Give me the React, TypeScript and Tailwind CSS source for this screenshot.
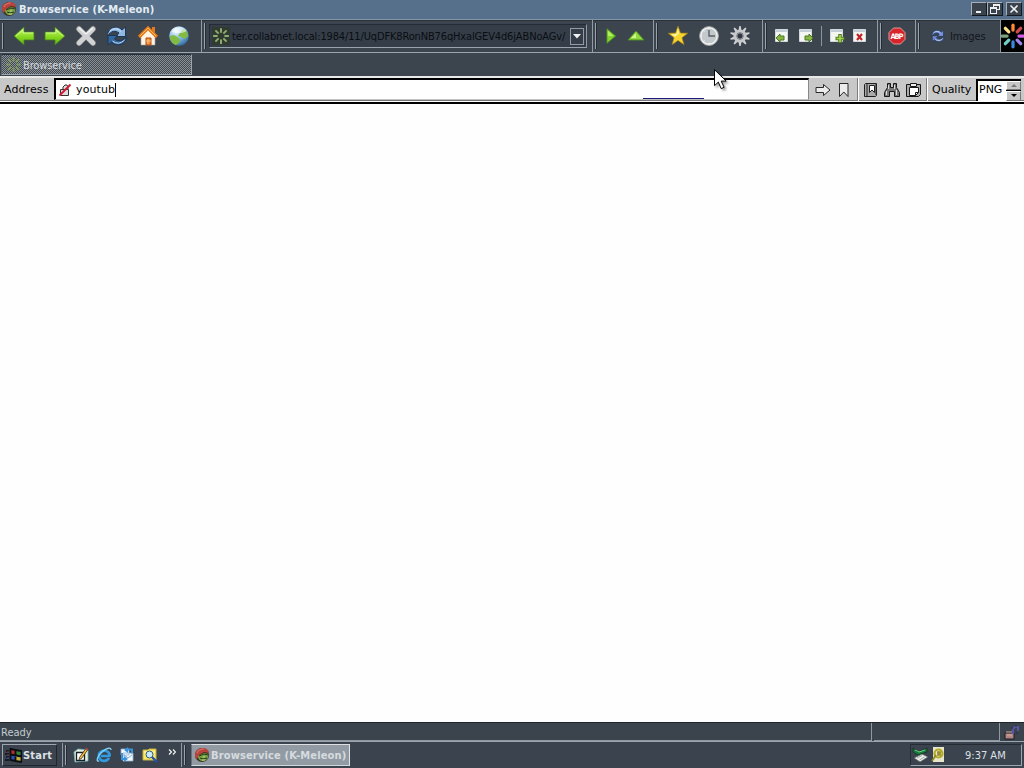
import type { ReactNode } from "react";
import clsx from "clsx";

type IconProps = { className?: string };

const TAHOMA = "font-['DejaVu_Sans_Condensed','DejaVu_Sans',sans-serif]";
const VERDANA = "font-['DejaVu_Sans',sans-serif]";

function Melon({ className = "size-4" }: IconProps) {
  return (
    <svg viewBox="0 0 16 16" className={className}>
      <circle cx="8" cy="8" r="7" fill="#3a3322" />
      <path d="M1 8C1 3 5 1 9 1s6 3 6 5l-5-1-5 3-2 4C1 11 1 9 1 8z" fill="#b9433b" />
      <path d="M3 6c1-3 4-4 7-4" fill="none" stroke="#d8706a" strokeWidth="1.2" />
      <path d="M4 9l6-3 4 1c1 3-1 7-5 7-3 0-5-2-5-5z" fill="#7aa544" />
      <path d="M5 9l5-2 4 1M6 11l3 1 4-1" fill="none" stroke="#24351b" />
      <path d="M9 10h2M8 13h3" stroke="#c2da8c" />
    </svg>
  );
}

function Burst({ className, colors, wide }: IconProps & { colors: string[]; wide?: boolean }) {
  return (
    <svg viewBox="0 0 24 24" className={className}>
      {colors.map((color, i) => (
        <path
          key={i}
          d={wide ? "M12 6.500V2" : "M12 7.500V1.500"}
          stroke={color}
          strokeWidth={wide ? 3 : 2.6}
          strokeLinecap={wide ? "round" : "butt"}
          transform={`rotate(${i * 45} 12 12)`}
        />
      ))}
    </svg>
  );
}

const green = Array<string>(8).fill("#8eae71");
const dimGreen = Array<string>(8).fill("#7f9a60");
const rainbow = ["#ff8934", "#cf4a4a", "#d65ae8", "#a284ee", "#3b87e4", "#6fd0c5", "#7aa57b", "#ffe28a"];

function Arrow({ flip }: { flip?: boolean }) {
  return (
    <svg viewBox="0 0 22 22" className={clsx("h-[22px] w-[22px]", flip && "-scale-x-100")}>
      <defs>
        <linearGradient id="arrow" x1="0" y1="0" x2="0" y2="1">
          <stop offset="0" stopColor="#cdf582" />
          <stop offset=".5" stopColor="#8ddc25" />
          <stop offset="1" stopColor="#5ab20c" />
        </linearGradient>
      </defs>
      <path d="M1 11L11 2v5h10v8H11v5z" fill="url(#arrow)" stroke="#417d22" strokeWidth=".8" />
      <path d="M3 11l7-6v3h10" fill="none" stroke="#d9ff9c" strokeWidth=".8" />
    </svg>
  );
}

function Stop() {
  return (
    <svg viewBox="0 0 22 22" className="h-[22px] w-[22px]">
      <path d="M4 4l14 14M18 4L4 18" stroke="#787b7d" strokeWidth="6" strokeLinecap="round" />
      <path d="M4 4l14 14M18 4L4 18" stroke="#d0d2d3" strokeWidth="4.6" strokeLinecap="round" />
      <path d="M4 3l7 6 7-6" fill="none" stroke="#f4f4f4" strokeWidth="1.2" />
    </svg>
  );
}

function Refresh({ className = "h-[22px] w-[22px]", light = "#8fb8e2", dark = "#34699f" }: IconProps & { light?: string; dark?: string }) {
  return (
    <svg viewBox="0 0 22 22" className={className}>
      <path d="M1.500 11C1 3 11-1 16 5l3.500-3v9.500H10L13 8C9 5 5 6 1.500 11z" fill={light} stroke="#1d3655" />
      <path d="M20.500 12c0 7-10 11-15 5l-3.500 3v-9.500h9.500l-3 3.500c4 3 8 2 12-2z" fill={dark} stroke="#1d3655" />
      <path d="M4 6c3-3 8-3 11 .500M6.500 16c4 3 8 3 12-1" fill="none" stroke="#d8ebfb" strokeWidth=".9" />
    </svg>
  );
}

function Home() {
  return (
    <svg viewBox="0 0 22 22" className="h-[22px] w-[22px]">
      <path d="M4 10l7-7 7 8v9H4z" fill="#fff3e2" stroke="#a6a09a" strokeWidth=".6" />
      <path d="M15 2h3v6h-3z" fill="#df7b22" />
      <path d="M2 12l9-9 9 9" fill="none" stroke="#e47616" strokeWidth="3.2" />
      <path d="M3 11l8-8 8 8" fill="none" stroke="#ffbd66" strokeWidth="1" />
      <path d="M9 13h5v7H9z" fill="#f48427" stroke="#a74f1d" />
      <path d="M11 14v5M9 16h5" stroke="#ffce8f" strokeWidth=".8" />
    </svg>
  );
}

function Globe() {
  return (
    <svg viewBox="0 0 22 22" className="h-[22px] w-[22px]">
      <defs>
        <radialGradient id="globe" cx=".35" cy=".25" r=".8">
          <stop offset="0" stopColor="#f5fcff" />
          <stop offset=".5" stopColor="#85bde9" />
          <stop offset="1" stopColor="#31699e" />
        </radialGradient>
      </defs>
      <circle cx="11" cy="11" r="9.800" fill="url(#globe)" />
      <path d="M2 11l4-1 5 3 1 4-4 3c-4-1-6-5-6-9zM12 8l3-4c3 1 5 4 5 7l-3 3-4-2-3-1z" fill="#83bb41" />
      <path d="M3.500 7c3-6 11-7 15-1-4 3-10 2-15 1z" fill="#fff" opacity=".55" />
    </svg>
  );
}

function Star() {
  return (
    <svg viewBox="0 0 22 22" className="h-[22px] w-[22px]">
      <path d="M11 1l2.500 7 7.300.2-5.800 4.500 2.100 7L11 15.500 5 19.800l2-7L1.200 8.200 8.500 8z" fill="#f6d52c" stroke="#9b7b20" strokeWidth=".7" />
      <path d="M11 3l-1.500 6-5.500.1L8 12l2-2 2-1z" fill="#fff4a0" />
    </svg>
  );
}

function Clock() {
  return (
    <svg viewBox="0 0 22 22" className="h-[22px] w-[22px]">
      <circle cx="11" cy="11" r="9.400" fill="#d4d7d9" stroke="#a1a5a8" />
      <circle cx="11" cy="11" r="8.100" fill="#c3c8cb" stroke="#f1f2f2" strokeWidth="1.200" />
      <path d="M11 5v6h6" fill="none" stroke="#54616a" strokeWidth="1.400" />
      <path d="M11 3v1M11 18v1M3 11h1M5.500 5.500l1 1M5.500 16.500l1-1" stroke="#fff" />
    </svg>
  );
}

function Gear() {
  return (
    <svg viewBox="0 0 22 22" className="h-[22px] w-[22px]">
      {[0, 36, 72, 108, 144, 180, 216, 252, 288, 324].map((angle) => (
        <path key={angle} d="M9.600 5l.7-4h1.400l.7 4z" fill="#d0d2d3" transform={`rotate(${angle} 11 11)`} />
      ))}
      <circle cx="11" cy="11" r="5" fill="none" stroke="#c6c8ca" strokeWidth="3.200" />
      <circle cx="11" cy="11" r="3" fill="#313841" stroke="#8b9094" />
    </svg>
  );
}

function PageIcon({ kind }: { kind: "left" | "right" | "add" | "close" }) {
  return (
    <svg viewBox="0 0 16 16" className="size-4">
      <path d="M1.500 1.500h12v12h-12z" fill="#f3f6f1" stroke="#d2d8dc" />
      <path d="M2 3h11" stroke="#b4bfcf" strokeWidth="1.500" />
      {kind === "left" && <path d="M2 10l4-4v2h4v4H6v2z" fill="#87b541" stroke="#4c7726" />}
      {kind === "right" && <path d="M15 10l-4-4v2H7v4h4v2z" fill="#87b541" stroke="#4c7726" />}
      {kind === "add" && (
        <>
          <path d="M11 6v9M6.500 10.500h9" stroke="#577b26" strokeWidth="3.600" />
          <path d="M11 7v7M7.500 10.500h7" stroke="#a0d550" strokeWidth="1.700" />
        </>
      )}
      {kind === "close" && <path d="M5 6l5 6M10 6l-5 6" stroke="#c51f23" strokeWidth="2" />}
    </svg>
  );
}

// Divider plus the drag handle that starts every band
function Band({ className, children, first }: { className: string; children?: ReactNode; first?: boolean }) {
  return (
    <div className={clsx("flex shrink-0 items-center", !first && "border-l border-[#8e9aa5]", className)}>
      <div className="ml-[2px] h-[26px] w-[2px] shrink-0 border-l border-[#98a3ac] bg-[#252c35]" />
      {children}
    </div>
  );
}

function TitleButton({ children }: { children: ReactNode }) {
  return (
    <div className="flex h-[14px] w-4 items-center justify-center border border-t-[#a6b0b8] border-r-[#151a20] border-b-[#151a20] border-l-[#a6b0b8] bg-[#3b444e]">
      <svg viewBox="0 0 12 12" className="size-3" fill="none" stroke="#eef0f1" shapeRendering="crispEdges">
        {children}
      </svg>
    </div>
  );
}

function TitleBar() {
  return (
    <div className="flex h-[19px] items-center bg-[#56708b] pb-px">
      <Melon className="ml-px size-4" />
      <span className="ml-[2px] whitespace-nowrap pt-px text-[11px] leading-none font-bold tracking-[0.15px] text-[#e5edf3]">
        Browservice (K-Meleon)
      </span>
      <div className="mr-[2px] ml-auto flex">
        <TitleButton>
          <path d="M3 9h5" strokeWidth="2" />
        </TitleButton>
        <TitleButton>
          <path d="M4.500 4V1.500h6v5H8M4 2.500h6M1.500 4.500h6v6h-6zM2 5.500h5" />
        </TitleButton>
        <div className="ml-[3px]">
          <TitleButton>
            <path d="M2.500 2.500l7 7M9.500 2.500l-7 7" strokeWidth="1.600" shapeRendering="auto" />
          </TitleButton>
        </div>
      </div>
    </div>
  );
}

function Toolbar() {
  return (
    <div className="flex h-[34px] border-t border-b border-t-[#8795a2] border-b-[#9aa4ad] bg-[#3c444e] shadow-[inset_0_1px_0_#29323c]">
      <Band first className="w-[201px]">
        <div className="ml-[9px] flex gap-[9px]">
          <Arrow />
          <Arrow flip />
          <Stop />
          <Refresh />
          <Home />
          <Globe />
        </div>
      </Band>
      <Band className="w-[391px]">
        <div className="ml-[3px] flex h-[24px] w-[378px] items-center border border-t-[#242d36] border-r-[#8f9aa4] border-b-[#9aa4ad] border-l-[#242d36] bg-[#353e48]">
          <Burst className="ml-[2px] size-[18px] shrink-0 bg-[#303a30]" colors={green} />
          <span className="ml-[2px] w-[338px] shrink-0 pt-[2px] whitespace-nowrap text-[11px] leading-[14px] tracking-[-0.145px] text-[#0a0d12]">
            ter.collabnet.local:1984/11/UqDFK8RonNB76qHxalGEV4d6jABNoAGv/
          </span>
          <div className="flex h-[17px] w-[14px] shrink-0 items-center justify-center border border-[#929ca5]">
            <svg viewBox="0 0 8 5" className="h-[5px] w-2">
              <path d="M0 0h8L4 4.500z" fill="#f0f1f4" />
            </svg>
          </div>
        </div>
      </Band>
      <Band className="w-[61px]">
        <svg viewBox="0 0 12 18" className="ml-[9px] h-[18px] w-[11px]">
          <path d="M1 1l9.500 8L1 17z" fill="#82d52c" stroke="#4c8b25" />
          <path d="M2 3l6 6H2z" fill="#b3ee63" />
        </svg>
        <svg viewBox="0 0 18 12" className="ml-[10px] h-3 w-[18px]">
          <path d="M1 10L9 1l8 9z" fill="#91da3c" stroke="#4c8b25" />
          <path d="M4 8l5-5v5z" fill="#d1f58d" />
        </svg>
      </Band>
      <Band className="w-[109px]">
        <div className="ml-[9px] flex gap-[9px]">
          <Star />
          <Clock />
          <Gear />
        </div>
      </Band>
      <Band className="w-[115px]">
        <div className="ml-[7px] flex items-center">
          <PageIcon kind="left" />
          <span className="ml-2">
            <PageIcon kind="right" />
          </span>
          <span className="ml-[7px] h-5 w-px bg-[#8a949e]" />
          <span className="ml-[7px]">
            <PageIcon kind="add" />
          </span>
          <span className="ml-[7px]">
            <PageIcon kind="close" />
          </span>
        </div>
      </Band>
      <Band className="w-[38px]">
        <svg viewBox="0 0 18 18" className="ml-[6px] size-[18px]">
          <path d="M5.500 1h7L17 5.500v7L12.500 17h-7L1 12.500v-7z" fill="#d8252b" stroke="#e8b9b9" strokeWidth=".8" />
          <text x="9" y="11.800" textAnchor="middle" textLength="13" className={TAHOMA} fontSize="7.500" fontWeight="700" fill="#fff">
            ABP
          </text>
        </svg>
      </Band>
      <Band className="w-[85px]">
        <Refresh className="ml-[11px] size-[14px]" light="#7b94dc" dark="#7286c7" />
        <span className="ml-[5px] pt-[2px] whitespace-nowrap text-[11px] tracking-[-0.1px] text-[#12161d]">Images</span>
      </Band>
      <div className="flex w-6 items-center justify-center overflow-hidden border-l border-[#8e9aa5] bg-black">
        <Burst wide className="size-[26px] shrink-0" colors={rainbow} />
      </div>
    </div>
  );
}

function TabStrip() {
  return (
    <div className="h-[23px] bg-[#3c444d] pt-px pl-px">
      <div className="flex h-[21px] w-[191px] items-center border border-t-[#252d36] border-r-[#9da6ae] border-b-[#9da6ae] border-l-[#59636d] bg-[#424a53] bg-[repeating-conic-gradient(#8b9197_0_25%,#414951_0_50%)] bg-[size:2px_2px]">
        <Burst className="ml-[3px] size-[17px]" colors={dimGreen} />
        <span className="ml-px pt-[2px] text-[11px] leading-none tracking-[-0.14px] text-[#d6dbdf]">Browservice</span>
      </div>
    </div>
  );
}

function Divider() {
  return <span className="h-[23px] w-[2px] shrink-0 border-l border-[#7d7d7d] bg-white" />;
}

function AddressBar() {
  return (
    <div className={clsx("flex h-[28px] items-center border-t-2 border-b-2 border-t-[#e9e9e9] border-b-black bg-[#c8c8c8] text-[11px] text-black shadow-[inset_0_-1px_0_#fff,inset_0_-2px_0_#777]", VERDANA)}>
      <span className="w-[54px] pl-[4px] tracking-[0.1px]">Address</span>
      <div className="relative mb-[2px] flex h-[22px] w-[755px] items-center border-t-2 border-r border-b border-l-2 border-t-black border-r-[#888] border-b-[#c2c2c2] border-l-black bg-white">
        <svg viewBox="0 0 14 14" className="ml-[2px] size-[14px]" fill="none">
          <path d="M2.500 6.500h8v6h-8zM5 6V4l2-2h2l1 2v2" stroke="#333" fill="#ddd" />
          <path d="M1.500 12.500l11-11" stroke="#d41935" strokeWidth="2" />
        </svg>
        <span className="ml-[4px] pt-px tracking-[0.12px]">youtub</span>
        <span className="h-[14px] w-px bg-black" />
        <span className="absolute bottom-0 left-[587px] h-px w-[61px] bg-[#1d1b7c]" />
      </div>
      <div className="flex h-[22px] flex-1 items-center pb-px">
        <svg viewBox="0 0 16 14" className="ml-[6px] h-[14px] w-4 shrink-0" fill="#ececec" stroke="#292929">
          <path d="M1 4.500h7.500v-3L15 7l-6.500 5.500v-3H1z" />
        </svg>
        <svg viewBox="0 0 12 16" className="mr-[7px] ml-[7px] h-4 w-3 shrink-0" fill="#ececec" stroke="#292929">
          <path d="M1.500 1.500h8.500v13L5.800 10l-4.300 4.500z" />
        </svg>
        <Divider />
        <svg viewBox="0 0 16 16" className="ml-[4px] size-4 shrink-0" fill="none" stroke="#202020">
          <path d="M1.500 2.500l1-1h11v12l-1 1h-11z" fill="#aaa" />
          <path d="M4 2v12M13 2v11" />
          <path d="M6.500 3.500h5v7L9 8l-2.500 2.500z" fill="#fff" />
        </svg>
        <svg viewBox="0 0 18 16" className="ml-[4px] h-4 w-[18px] shrink-0" fill="#777" stroke="#171717">
          <path d="M4.500 1.500h3v4h3v-4h3v4l3 5v4h-5v-5h-5v5h-5v-4l3-5z" />
          <path d="M3.500 9v4M13.500 8v5M5.500 3v4M11.500 3v4" stroke="#ddd" />
        </svg>
        <svg viewBox="0 0 17 16" className="mr-[4px] ml-[4px] h-4 w-[17px] shrink-0" fill="none" stroke="#171717">
          <path d="M1.500 2.500h14v10l-2 2h-12z" fill="#aaa" />
          <path d="M4.500 5.500h9v5l-3 3h-6z" fill="#fff" />
          <path d="M5.500 1.500h6v3h-6z" fill="#eee" />
          <path d="M10.500 13.500v-3h3" />
        </svg>
        <Divider />
        <span className="ml-[4px] w-[44px] shrink-0 pt-px whitespace-nowrap">Quality</span>
        <div className="flex h-[22px] w-[45px] shrink-0 border-t-2 border-l-2 border-black bg-white">
          <span className="w-[28px] pt-px pl-px leading-4">PNG</span>
          <div className="flex flex-1 flex-col gap-px bg-black">
            {[false, true].map((down) => (
              <div key={String(down)} className="flex flex-1 items-center justify-center border border-t-white border-r-[#777] border-b-[#777] border-l-white bg-[#c6c6c6]">
                <svg viewBox="0 0 6 3" className={clsx("h-[3px] w-[6px]", down && "rotate-180")}>
                  <path d="M0 3h6L3 0z" fill={down ? "#000" : "#777"} />
                </svg>
              </div>
            ))}
          </div>
        </div>
      </div>
    </div>
  );
}

function StatusBar() {
  return (
    <div className="flex h-[19px] border-t border-[#20252b] bg-[#3b444d] text-[11px] text-[#c4cbd0]">
      <span className="w-[872px] border-r border-b border-[#8f99a2] pl-px leading-[19px]">Ready</span>
      <span className="ml-[2px] w-[126px] border-r border-b border-[#8f99a2]" />
      <svg viewBox="0 0 16 16" className="mt-[2px] ml-[4px] size-4" fill="none">
        <path d="M1 8h9v6H1z" fill="#b48681" stroke="#1b1b24" />
        <path d="M2 7h6M3 10h5" stroke="#d0aaa6" />
        <path d="M9 9V4l2-2h3v4" stroke="#5754a0" strokeWidth="2" />
        <path d="M7 3h2M11 1h2M12 8h2" stroke="#292654" />
      </svg>
    </div>
  );
}

function QuickLaunch() {
  return (
    <div className="ml-[6px] flex items-center gap-[7px]">
      <svg viewBox="0 0 16 16" className="size-4">
        <path d="M1 5l4-3 10 1v11l-13 1z" fill="#e9efdc" stroke="#69b4c1" strokeWidth=".8" />
        <path d="M3.500 5.500h8v8h-8z" fill="#fff" stroke="#1a2022" strokeWidth="1.300" />
        <path d="M6.500 10.500L12.500 2l2 1-6 8.500-2.500 1z" fill="#f7bd3d" stroke="#38281c" strokeWidth=".8" />
        <path d="M12.500 1.500l2 1" stroke="#be4935" strokeWidth="1.500" />
      </svg>
      <svg viewBox="0 0 16 16" className="size-4" fill="none">
        <path d="M13 11c-2 4-9 4-10-1-1-5 5-8 9-5 2 2 2 4 1 4H5" stroke="#2f9be0" strokeWidth="2.700" />
        <path d="M3 14c-4 1-1-6 4-10 4-3 8-4 8-1" stroke="#88d6fb" strokeWidth="1.300" />
      </svg>
      <svg viewBox="0 0 16 16" className="size-4">
        <path d="M2 2h8v6H2zM4 6h10v8H4z" fill="#f4f9ff" stroke="#8db1d1" strokeWidth=".8" />
        <path d="M5 8l4 3 4-3" fill="none" stroke="#75a8dd" />
        <path d="M8 2.500h5v4M3 6v6h4" fill="none" stroke="#3b93db" strokeWidth="2" />
        <path d="M5 3l4-3v6zM5 9v6l4-3z" fill="#3b93db" />
      </svg>
      <svg viewBox="0 0 16 16" className="size-4">
        <path d="M1 3h5l1-1h7v11H1z" fill="#fbe965" stroke="#c3b142" />
        <path d="M2 5h11" stroke="#fff8bd" />
        <circle cx="7.500" cy="7.500" r="3.500" fill="#c7edff" stroke="#355a79" />
        <path d="M10 10l5 5" stroke="#1c52ad" strokeWidth="2.200" />
      </svg>
      <svg viewBox="0 0 8 6" className="mb-[7px] ml-[3px] h-[6px] w-2" fill="none" stroke="#f4f6f7" strokeWidth="1.200">
        <path d="M1 .5L3.500 3 1 5.500M5 .5L7.500 3 5 5.500" />
      </svg>
    </div>
  );
}

function Taskbar() {
  return (
    <div className="flex h-[27px] items-center border-t border-[#9ba5ad] bg-[#3b434e] text-[11px]">
      <div className="ml-[2px] flex h-[22px] w-[55px] items-center border border-t-[#9da6ae] border-r-[#20262e] border-b-[#20262e] border-l-[#9da6ae] font-bold text-[#dce1e5]">
        <svg viewBox="0 0 17 16" className="ml-[2px] h-4 w-[17px] shrink-0">
          <path d="M6 2l4 1v5L6 7z" fill="#b52f29" />
          <path d="M11 3l5 1v5l-5-1z" fill="#34803a" />
          <path d="M6 8l4 1v5l-4-1z" fill="#2b4fb0" />
          <path d="M11 9l5 1v5l-5-1z" fill="#c4ae38" />
          <path d="M5.500 2l5 1 6 1v11l-6-1-5-1zM10.500 3v11M5.500 7.500l11 2" fill="none" stroke="#0a0d12" strokeWidth="1.800" />
          <path d="M1 4h3M0 7h4M1 10h3M0 13h4" stroke="#0e1016" strokeWidth="1.600" />
          <path d="M2 5h2M2 8h2" stroke="#8c3541" />
          <path d="M2 11h2" stroke="#3555a4" />
        </svg>
        <span className="ml-px pt-[2px] tracking-[0.2px]">Start</span>
      </div>
      <Band className="ml-[5px] h-[24px] w-[119px] [&>div:first-child]:h-[20px]">
        <QuickLaunch />
      </Band>
      <Band className="h-[24px] w-[9px] [&>div:first-child]:h-[20px]" />
      <div className="ml-px flex h-[22px] w-[159px] items-center border border-t-[#dce0e3] border-r-[#e0e4e6] border-b-[#d1d6da] border-l-[#68717a] bg-[#929ba4]">
        <Melon className="ml-[2px] size-4 shrink-0" />
        <span className="ml-px pt-[2px] whitespace-nowrap font-bold tracking-[0.15px] text-[#d6dbdf]">Browservice (K-Meleon)</span>
      </div>
      <div className="mr-[2px] ml-auto flex h-[22px] w-[112px] items-center border border-t-[#252c34] border-r-[#9ba5ad] border-b-[#9ba5ad] border-l-[#252c34] text-[#dce0e4]">
        <svg viewBox="0 0 18 16" className="ml-px h-4 w-[18px]">
          <path d="M1 1l5 4 9-4v4L6 8 1 5z" fill="#147c38" stroke="#112b1c" strokeWidth=".7" />
          <path d="M3 3l4 2 6-2" stroke="#70d28a" fill="none" />
          <path d="M2 11l8-4 6 3-8 5z" fill="#e9ece9" stroke="#525851" strokeWidth=".7" />
          <path d="M5 11l5-2.500M7.500 13l5-3" stroke="#a4aaa4" />
        </svg>
        <svg viewBox="0 0 14 16" className="ml-px h-4 w-[14px]">
          <path d="M2 0h11v15H2z" fill="#e7e6cd" />
          <circle cx="7.500" cy="6.500" r="4" fill="none" stroke="#b3a926" strokeWidth="2.200" />
          <path d="M5 8l-4 6M7 5h2v3H7z" fill="none" stroke="#908820" strokeWidth="1.700" />
        </svg>
        <span className="ml-[20px] pt-[2px] whitespace-nowrap">9:37 AM</span>
      </div>
    </div>
  );
}

export default function App() {
  return (
    <div className={clsx("relative flex h-screen w-[1024px] cursor-default flex-col overflow-hidden bg-white", TAHOMA)}>
      <TitleBar />
      <Toolbar />
      <TabStrip />
      <AddressBar />
      <main className="flex-1 bg-[#fefefe]" />
      <StatusBar />
      <Taskbar />
      <svg viewBox="0 0 14 22" className="absolute top-[69px] left-[714px] h-[22px] w-[14px] drop-shadow-[2px_2px_1px_rgba(0,0,0,0.35)]">
        <path d="M.5 .7v16l3.800-3.600 2.900 6.500 2.900-1.300-2.900-6.200h5z" fill="#fff" stroke="#000" />
      </svg>
    </div>
  );
}
